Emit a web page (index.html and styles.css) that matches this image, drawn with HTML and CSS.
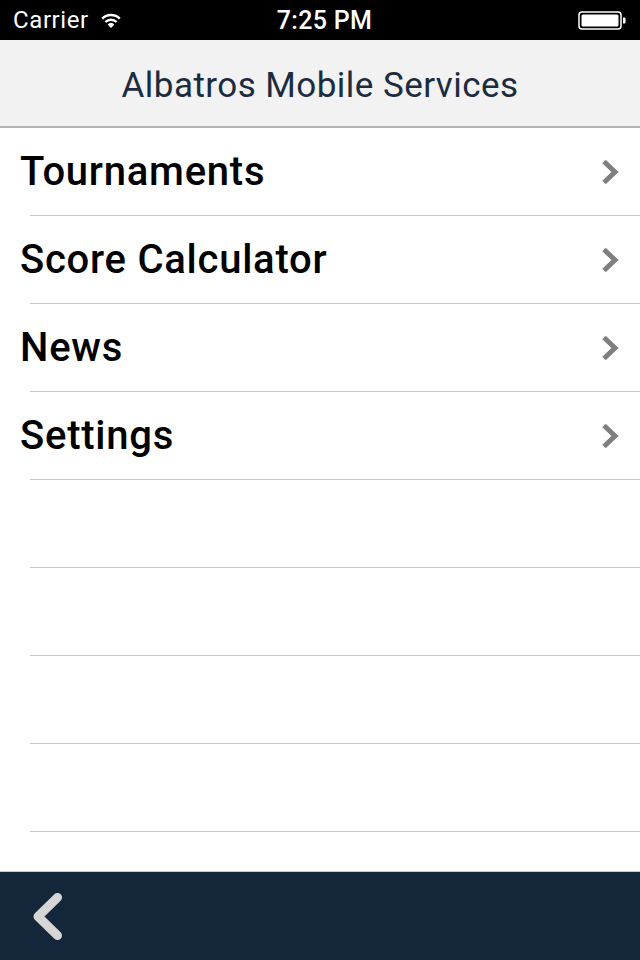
FILE: index.html
```html
<!DOCTYPE html>
<html lang="en">
<head>
    <meta charset="UTF-8">
    <meta name="viewport" content="width=device-width, initial-scale=1.0">
    <title>Albatros Mobile Services</title>
    <link rel="stylesheet" href="styles.css">
</head>
<body>
    <div class="status-bar">
        <div class="status-left">
            <span>Carrier</span>
            <svg class="wifi" width="24" height="18" viewBox="0 0 24 18">
                <path d="M12 17 L8.6 13.4 A5 5 0 0 1 15.4 13.4 Z" fill="#fff"/>
                <path d="M6.4 11 A8 8 0 0 1 17.6 11" fill="none" stroke="#fff" stroke-width="2.4"/>
                <path d="M3.2 7.6 A12.5 12.5 0 0 1 20.8 7.6" fill="none" stroke="#fff" stroke-width="2.4"/>
            </svg>
        </div>
        <div class="status-time">7:25 PM</div>
        <div class="status-right">
            <svg width="50" height="20" viewBox="0 0 50 20">
                <rect x="1" y="1" width="42" height="17" rx="3" fill="none" stroke="#fff" stroke-width="1.5"/>
                <rect x="3.5" y="3.5" width="37" height="12" rx="1.5" fill="#fff"/>
                <path d="M45 6.5 h1.5 a1 1 0 0 1 1 1 v4 a1 1 0 0 1 -1 1 h-1.5 Z" fill="#fff"/>
            </svg>
        </div>
    </div>

    <header class="nav-bar">
        <h1>Albatros Mobile Services</h1>
    </header>

    <ul class="menu">
        <li class="menu-row">
            <span class="menu-label">Tournaments</span>
            <svg class="chevron" width="20" height="28" viewBox="0 0 20 28"><path d="M4 3.5 L15 14 L4 24.5"/></svg>
        </li>
        <li class="menu-row">
            <span class="menu-label">Score Calculator</span>
            <svg class="chevron" width="20" height="28" viewBox="0 0 20 28"><path d="M4 3.5 L15 14 L4 24.5"/></svg>
        </li>
        <li class="menu-row">
            <span class="menu-label">News</span>
            <svg class="chevron" width="20" height="28" viewBox="0 0 20 28"><path d="M4 3.5 L15 14 L4 24.5"/></svg>
        </li>
        <li class="menu-row">
            <span class="menu-label">Settings</span>
            <svg class="chevron" width="20" height="28" viewBox="0 0 20 28"><path d="M4 3.5 L15 14 L4 24.5"/></svg>
        </li>
        <li class="menu-row"></li>
        <li class="menu-row"></li>
        <li class="menu-row"></li>
        <li class="menu-row"></li>
        <li class="menu-row"></li>
    </ul>

    <footer class="tab-bar">
        <svg class="back" width="40" height="56" viewBox="0 0 40 56">
            <path d="M31.5 9.5 L12 28.5 L31.5 47.5" fill="none" stroke="#d6d6d6" stroke-width="9" stroke-linecap="round" stroke-linejoin="round"/>
        </svg>
    </footer>
</body>
</html>
```

FILE: styles.css
```css
body {
    margin: 0;
    width: 640px;
    height: 960px;
    font-family: Roboto, "Liberation Sans", sans-serif;
    background-color: #ffffff;
    display: flex;
    flex-direction: column;
    overflow: hidden;
}

.status-bar {
    flex-shrink: 0;
    height: 40px;
    background-color: #000;
    color: #fff;
    display: flex;
    align-items: center;
    justify-content: space-between;
    padding: 0 12px 0 13px;
    font-size: 24px;
    box-sizing: border-box;
}

.status-left {
    flex: 1;
    display: flex;
    align-items: center;
    gap: 10px;
    letter-spacing: 0.6px;
}

.status-time {
    margin-left: 8px;
    font-weight: 500;
    font-size: 25px;
    letter-spacing: 0.3px;
}

.status-right {
    flex: 1;
    display: flex;
    justify-content: flex-end;
    padding-top: 1px;
}

.nav-bar {
    flex-shrink: 0;
    height: 86px;
    background-color: #f2f2f2;
    border-bottom: 2px solid #b3b3b3;
    display: flex;
    align-items: center;
    justify-content: center;
}

.nav-bar h1 {
    margin: 5px 0 0;
    font-weight: 400;
    font-size: 35px;
    letter-spacing: 0.45px;
    color: #1b2b40;
}

.menu {
    list-style: none;
    margin: 0;
    padding: 0;
    flex: 1;
    overflow: hidden;
}

.menu-row {
    height: 87px;
    margin-left: 30px;
    padding-right: 20px;
    border-bottom: 1px solid #c8c8c8;
    display: flex;
    align-items: center;
    justify-content: space-between;
}

.menu-label {
    margin-left: -10px;
    font-size: 40px;
    font-weight: 500;
    letter-spacing: 0.75px;
    color: #000;
}

.chevron path {
    fill: none;
    stroke: #7f7f7f;
    stroke-width: 5;
}

.tab-bar {
    flex-shrink: 0;
    height: 88px;
    background-color: #14263a;
    border-top: 1px solid #c8c8c8;
    display: flex;
    align-items: center;
    padding-left: 26px;
}
```
